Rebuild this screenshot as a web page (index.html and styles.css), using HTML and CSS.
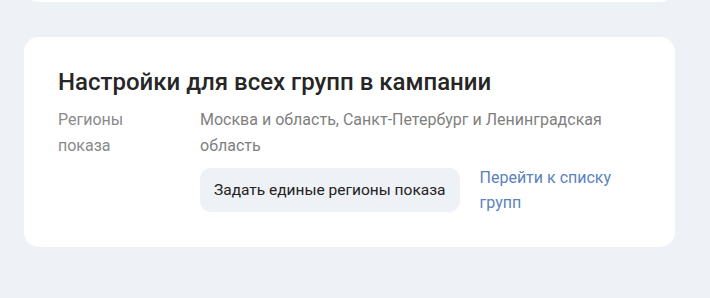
FILE: index.html
```html
<!DOCTYPE html>
<html lang="ru">
<head>
<meta charset="utf-8">
<link rel="stylesheet" href="styles.css">
</head>
<body>
<div class="card card-prev"></div>
<section class="card">
  <h2 class="title">Настройки для всех групп в кампании</h2>
  <div class="row">
    <div class="label">Регионы<br>показа</div>
    <div class="value">
      <div class="regions">Москва и область, Санкт-Петербург и Ленинградская область</div>
      <div class="actions">
        <button class="btn">Задать единые регионы показа</button>
        <a class="link" href="#">Перейти к списку<br>групп</a>
      </div>
    </div>
  </div>
</section>
</body>
</html>
```
FILE: styles.css
```css
html, body {
  margin: 0;
  padding: 0;
  background: #eef1f6;
  font-family: Roboto, "Liberation Sans", sans-serif;
}
body {
  width: 710px;
  height: 298px;
  overflow: hidden;
}
.card {
  background: #fff;
  border-radius: 15px;
  width: 651px;
  margin-left: 24px;
  box-sizing: border-box;
}
.card-prev {
  height: 40px;
  margin-top: -38px;
  margin-bottom: 35px;
}
section.card {
  padding: 30px 34px 32px 34px;
}
.title {
  margin: 0 0 10px 0;
  font-size: 24px;
  line-height: 30px;
  font-weight: 500;
  color: #262626;
}
.row {
  display: flex;
}
.label {
  width: 142px;
  flex: none;
  font-size: 16px;
  line-height: 26px;
  color: #8a8a8a;
}
.value {
  flex: 1;
}
.regions {
  font-size: 16px;
  line-height: 26px;
  color: #7f7f7f;
  width: 420px;
}
.actions {
  display: flex;
  align-items: flex-start;
  gap: 20px;
  margin-top: 9px;
}
.btn {
  border: 0;
  background: #eef1f6;
  border-radius: 11px;
  height: 44px;
  padding: 0 14px;
  font-family: inherit;
  font-size: 15.5px;
  color: #222;
}
.link {
  font-size: 16px;
  line-height: 25px;
  color: #5b82bd;
  text-decoration: none;
  margin-top: -3px;
}
```
